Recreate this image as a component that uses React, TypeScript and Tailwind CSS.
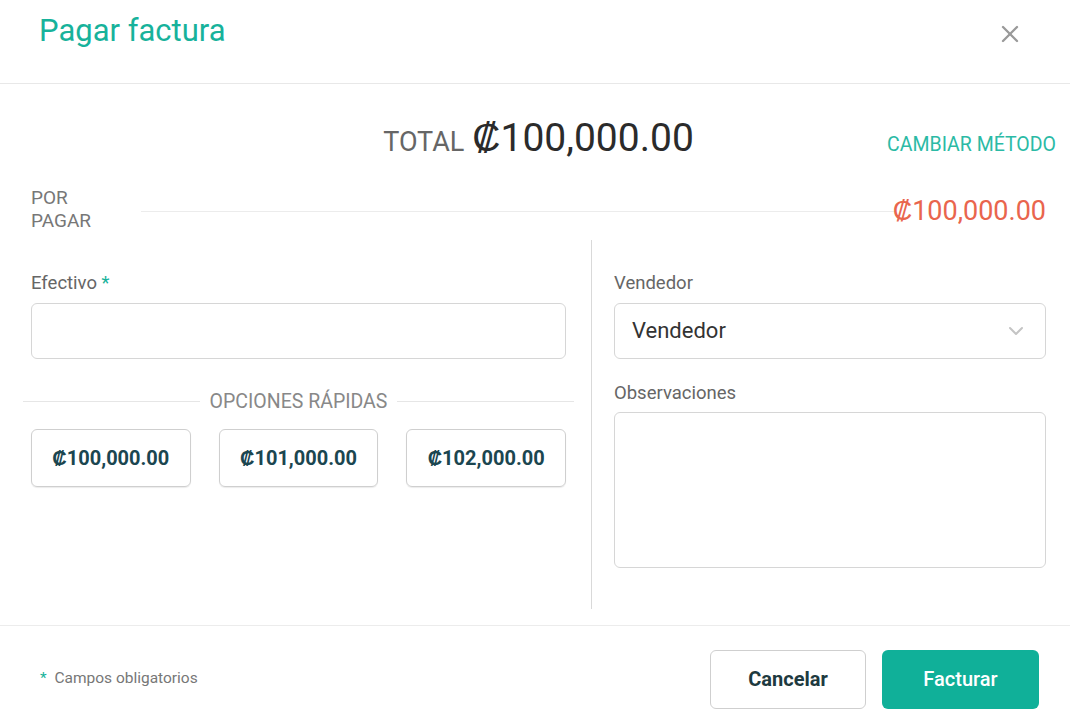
import { X, ChevronDown } from 'lucide-react';

const quickOptions = ['₡100,000.00', '₡101,000.00', '₡102,000.00'];

export default function App() {
  return (
    <div className="w-[1070px] h-[718px] bg-white font-['Roboto','Liberation_Sans',sans-serif] overflow-hidden">
      {/* Header */}
      <div className="flex h-[84px] items-start justify-between border-b border-[#e8e8e8] pl-[39px] pr-[46px] pt-[12px]">
        <h1 className="text-[31px] leading-[38px] text-[#17b29b]">Pagar factura</h1>
        <button className="mt-[8px] text-[#9a9a9a]">
          <X size={28} strokeWidth={2} />
        </button>
      </div>

      {/* Totals */}
      <div className="pl-[31px] pr-[14px]">
        <div className="mt-[32px] grid grid-cols-[1fr_auto_1fr] items-baseline">
          <div />
          <div className="mr-[10px] flex items-baseline gap-[8px]">
            <span className="text-[27px] text-[#666]">TOTAL</span>
            <span className="text-[39px] leading-[44px] text-[#2b2b2b]">₡100,000.00</span>
          </div>
          <div className="text-right text-[19.5px] text-[#2bbaa5]">CAMBIAR MÉTODO</div>
        </div>

        <div className="mt-[23px] mr-[10px] flex items-center">
          <div className="w-[110px] pb-[5px] text-[19px] leading-[23px] text-[#777]">
            POR
            <br />
            PAGAR
          </div>
          <div className="h-px flex-1 bg-[#ececec]" />
          <div className="-ml-[2px] text-[27px] leading-[32px] text-[#e9654d]">₡100,000.00</div>
        </div>
      </div>

      {/* Body columns */}
      <div className="mt-[3px] flex h-[369px] pl-[31px] pr-[24px]">
        <div className="w-[561px] border-r border-[#d9d9d9] pr-[25px] pt-[33px]">
          <label className="block text-[18.5px] leading-[20px] text-[#666]">
            Efectivo <span className="text-[#17b29b]">*</span>
          </label>
          <input className="mt-[10px] h-[56px] w-full rounded-[6px] border border-[#d6d6d6] px-3 outline-none" />

          <div className="-mx-[8px] mt-[32px] flex items-center">
            <div className="h-px flex-1 bg-[#e6e6e6]" />
            <span className="px-[10px] text-[19.5px] leading-[22px] text-[#888]">OPCIONES RÁPIDAS</span>
            <div className="h-px flex-1 bg-[#e6e6e6]" />
          </div>

          <div className="mt-[16px] grid grid-cols-3 gap-[28px]">
            {quickOptions.map((opt) => (
              <button
                key={opt}
                className="h-[58px] rounded-[6px] border border-[#cfcfcf] text-[20px] font-bold text-[#1b4650] shadow-[0_1px_1px_rgba(0,0,0,0.08)]"
              >
                {opt}
              </button>
            ))}
          </div>
        </div>

        <div className="flex-1 pl-[22px] pt-[33px]">
          <label className="block text-[18.5px] leading-[20px] text-[#666]">Vendedor</label>
          <div className="mt-[10px] flex h-[56px] items-center justify-between rounded-[6px] border border-[#d6d6d6] pl-[17px] pr-[17px]">
            <span className="text-[22px] text-[#333]">Vendedor</span>
            <ChevronDown size={24} strokeWidth={2} className="text-[#c4c4c4]" />
          </div>

          <label className="mt-[24px] block text-[18.5px] leading-[20px] text-[#666]">Observaciones</label>
          <textarea className="mt-[9px] block h-[156px] w-full resize-none rounded-[6px] border border-[#d6d6d6] outline-none" />
        </div>
      </div>

      {/* Footer */}
      <div className="mt-[16px] flex h-[94px] justify-between border-t border-[#ececec] pl-[40px] pr-[31px] pt-[24px]">
        <div className="mt-[18px] text-[15.5px] leading-[20px] text-[#777]">
          <span className="text-[#17b29b]">*</span>&nbsp;&nbsp;Campos obligatorios
        </div>
        <div className="flex gap-[16px]">
          <button className="h-[59px] w-[156px] rounded-[6px] border border-[#cfcfcf] text-[20px] font-bold text-[#1e3a40]">
            Cancelar
          </button>
          <button className="h-[59px] w-[157px] rounded-[6px] bg-[#10b099] text-[20px] font-medium text-white">
            Facturar
          </button>
        </div>
      </div>
    </div>
  );
}
